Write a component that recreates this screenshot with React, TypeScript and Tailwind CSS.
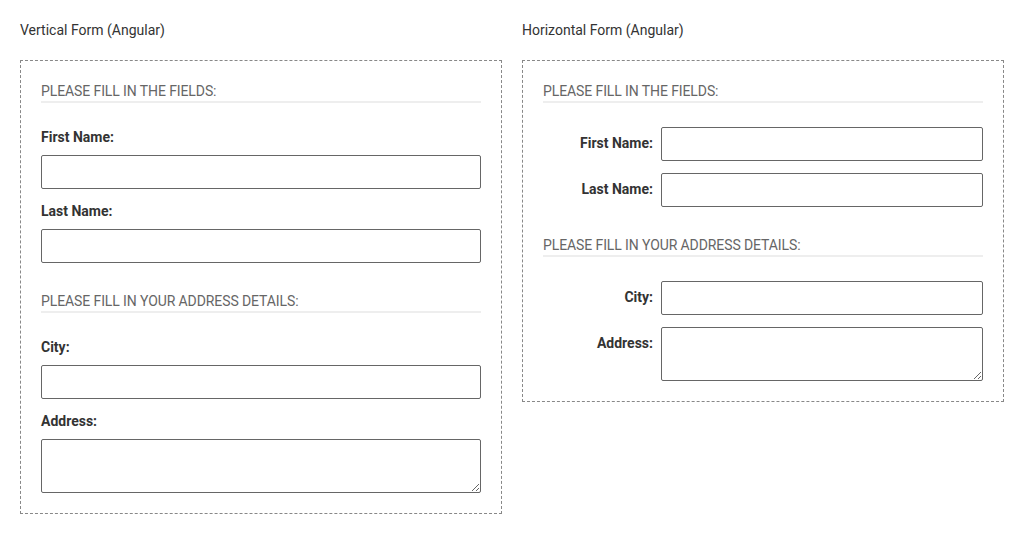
import React from 'react';

const inputCls =
  "block w-full h-[34px] border border-[#666] rounded-[2px] bg-white px-3 text-sm text-[#333] outline-none";
const areaCls =
  "block w-full h-[54px] border border-[#666] rounded-[2px] bg-white px-3 py-1.5 text-sm text-[#333] outline-none";

function SectionHeading({ children }: { children: React.ReactNode }) {
  return (
    <div className="text-sm leading-5 text-[#666] uppercase tracking-[-0.1px] border-b-2 border-[#eee]">
      {children}
    </div>
  );
}

function VerticalForm() {
  return (
    <div className="border border-dashed border-[#888] px-5 pt-5 pb-5">
      <SectionHeading>Please fill in the fields:</SectionHeading>
      <div className="mt-6">
        <label className="block text-sm leading-5 font-bold text-[#333] mb-2">First Name:</label>
        <input className={inputCls} type="text" />
      </div>
      <div className="mt-3">
        <label className="block text-sm leading-5 font-bold text-[#333] mb-2">Last Name:</label>
        <input className={inputCls} type="text" />
      </div>
      <div className="mt-7">
        <SectionHeading>Please fill in your address details:</SectionHeading>
      </div>
      <div className="mt-6">
        <label className="block text-sm leading-5 font-bold text-[#333] mb-2">City:</label>
        <input className={inputCls} type="text" />
      </div>
      <div className="mt-3">
        <label className="block text-sm leading-5 font-bold text-[#333] mb-2">Address:</label>
        <textarea className={areaCls} />
      </div>
    </div>
  );
}

function Row({ label, area }: { label: string; area?: boolean }) {
  return (
    <div className="flex items-start gap-2">
      <label className="w-[110px] shrink-0 text-right text-sm leading-5 font-bold text-[#333] pt-[6px]">
        {label}
      </label>
      <div className="flex-1">
        {area ? <textarea className={areaCls} /> : <input className={inputCls} type="text" />}
      </div>
    </div>
  );
}

function HorizontalForm() {
  return (
    <div className="border border-dashed border-[#888] px-5 pt-5 pb-5">
      <SectionHeading>Please fill in the fields:</SectionHeading>
      <div className="mt-6">
        <Row label="First Name:" />
      </div>
      <div className="mt-3">
        <Row label="Last Name:" />
      </div>
      <div className="mt-7">
        <SectionHeading>Please fill in your address details:</SectionHeading>
      </div>
      <div className="mt-6">
        <Row label="City:" />
      </div>
      <div className="mt-3">
        <Row label="Address:" area />
      </div>
    </div>
  );
}

export default function App() {
  return (
    <div
      className="bg-white min-h-screen px-5 pt-5 text-[#333]"
      style={{ fontFamily: 'Roboto, "Liberation Sans", sans-serif' }}
    >
      <div className="grid grid-cols-2 gap-5 items-start">
        <div>
          <div className="text-sm leading-5 mb-5">Vertical Form (Angular)</div>
          <VerticalForm />
        </div>
        <div>
          <div className="text-sm leading-5 mb-5">Horizontal Form (Angular)</div>
          <HorizontalForm />
        </div>
      </div>
    </div>
  );
}
